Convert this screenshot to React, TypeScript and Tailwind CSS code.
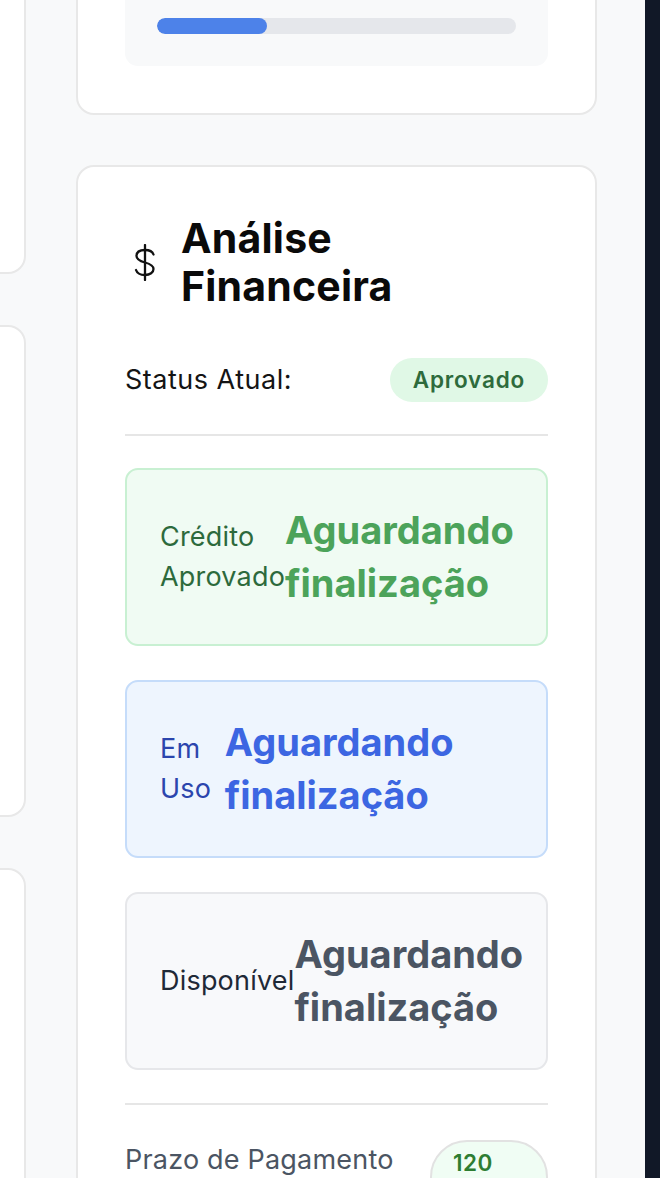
import React from "react";

function DollarIcon() {
  return (
    <svg width="24" height="37" viewBox="0 0 24 37" fill="none" stroke="#111111" strokeWidth="2.3" strokeLinecap="round">
      <path d="M12 1V36" />
      <path d="M20.5 10.5C19.5 7.5 16.5 6 12 6C6.5 6 3.5 8.5 3.5 12C3.5 15.5 6.5 17 12 18.5C17.5 20 20.5 21.5 20.5 25C20.5 28.5 17 31 12 31C7 31 4 29 3 26" />
    </svg>
  );
}

type Tone = "green" | "blue" | "gray";

const toneClasses: Record<Tone, { box: string; label: string; value: string }> = {
  green: {
    box: "bg-[#f0fbf3] border-[#c8f0d2]",
    label: "text-[#2d6a3c]",
    value: "text-[#4ca35a]",
  },
  blue: {
    box: "bg-[#eef5fe] border-[#c5dcfa]",
    label: "text-[#2b45ad]",
    value: "text-[#3c66e2]",
  },
  gray: {
    box: "bg-[#f8f9fb] border-[#e6e7ea]",
    label: "text-[#1f2937]",
    value: "text-[#4b5563]",
  },
};

function AmountBox({ tone, label, value }: { tone: Tone; label: string; value: string }) {
  const t = toneClasses[tone];
  return (
    <div className={`flex items-center justify-between rounded-[13px] border-2 px-[33px] py-[34px] ${t.box}`}>
      <span className={`text-[27px] leading-[40.5px] tracking-[0.2px] ${t.label}`}>{label}</span>
      <span className={`text-[38px] font-bold leading-[53px] ${t.value}`}>{value}</span>
    </div>
  );
}

export default function App() {
  return (
    <div className="flex h-[1178px] overflow-hidden bg-[#f8f9fa] font-['Inter',sans-serif]">
      <div className="flex flex-1 gap-[50px] pr-[48px]">
        {/* left column, mostly scrolled out of view */}
        <div className="-ml-[274px] -mt-[126px] flex w-[300px] shrink-0 flex-col gap-[51px]">
          <div className="h-[400px] shrink-0 rounded-[18px] border-2 border-[#e8e8e8] bg-white" />
          <div className="h-[492px] shrink-0 rounded-[18px] border-2 border-[#e8e8e8] bg-white" />
          <div className="h-[400px] shrink-0 rounded-[18px] border-2 border-[#e8e8e8] bg-white" />
        </div>

        <div className="-mt-[63px] flex w-[521px] shrink-0 flex-col gap-[50px]">
          <div className="shrink-0 rounded-[18px] border-2 border-[#e8e8e8] bg-white p-[47px]">
            <div className="rounded-[13px] bg-[#f8f9fa] p-8">
              <div className="h-4 w-full overflow-hidden rounded-full bg-[#e5e7eb]">
                <div className="h-full rounded-full bg-[#4d82e9]" style={{ width: "30.6%" }} />
              </div>
            </div>
          </div>

          <div className="shrink-0 rounded-[18px] border-2 border-[#e8e8e8] bg-white p-[47px]">
            <div className="flex items-center gap-4">
              <div className="flex w-10 justify-center">
                <DollarIcon />
              </div>
              <h2 className="max-w-[260px] text-[41px] font-bold leading-[48px] tracking-[0.2px] text-[#0a0a0a]">
                Análise Financeira
              </h2>
            </div>

            <div className="mt-12 flex items-center justify-between border-b-2 border-[#e6e6e6] pb-8">
              <span className="text-[27px] leading-[40.5px] tracking-[0.5px] text-[#141414]">Status Atual:</span>
              <span className="flex h-[44px] items-center rounded-full bg-[#e0f8e6] px-[23px] text-[22.5px] font-semibold leading-[28px] tracking-[0.8px] text-[#2e6b3c]">
                Aprovado
              </span>
            </div>

            <div className="mt-8 flex flex-col gap-[34px]">
              <AmountBox tone="green" label="Crédito Aprovado" value="Aguardando finalização" />
              <AmountBox tone="blue" label="Em Uso" value="Aguardando finalização" />
              <AmountBox tone="gray" label="Disponível" value="Aguardando finalização" />
            </div>

            <div className="mt-[33px] flex items-start justify-between border-t-2 border-[#e6e6e6] pt-[35px]">
              <span className="text-[27px] leading-[40.5px] tracking-[0.2px] text-[#4b5563]">Prazo de Pagamento</span>
              <span className="w-[118px] shrink-0 rounded-full border-2 border-[#e2e2e2] bg-[#f0fdf4] px-[21px] py-[7px] text-[22.5px] font-semibold leading-[28px] tracking-[0.5px] text-[#2e7d32]">
                120 dias
              </span>
            </div>
          </div>
        </div>
      </div>
      <div className="w-[15px] shrink-0 bg-[#111827]" />
    </div>
  );
}
